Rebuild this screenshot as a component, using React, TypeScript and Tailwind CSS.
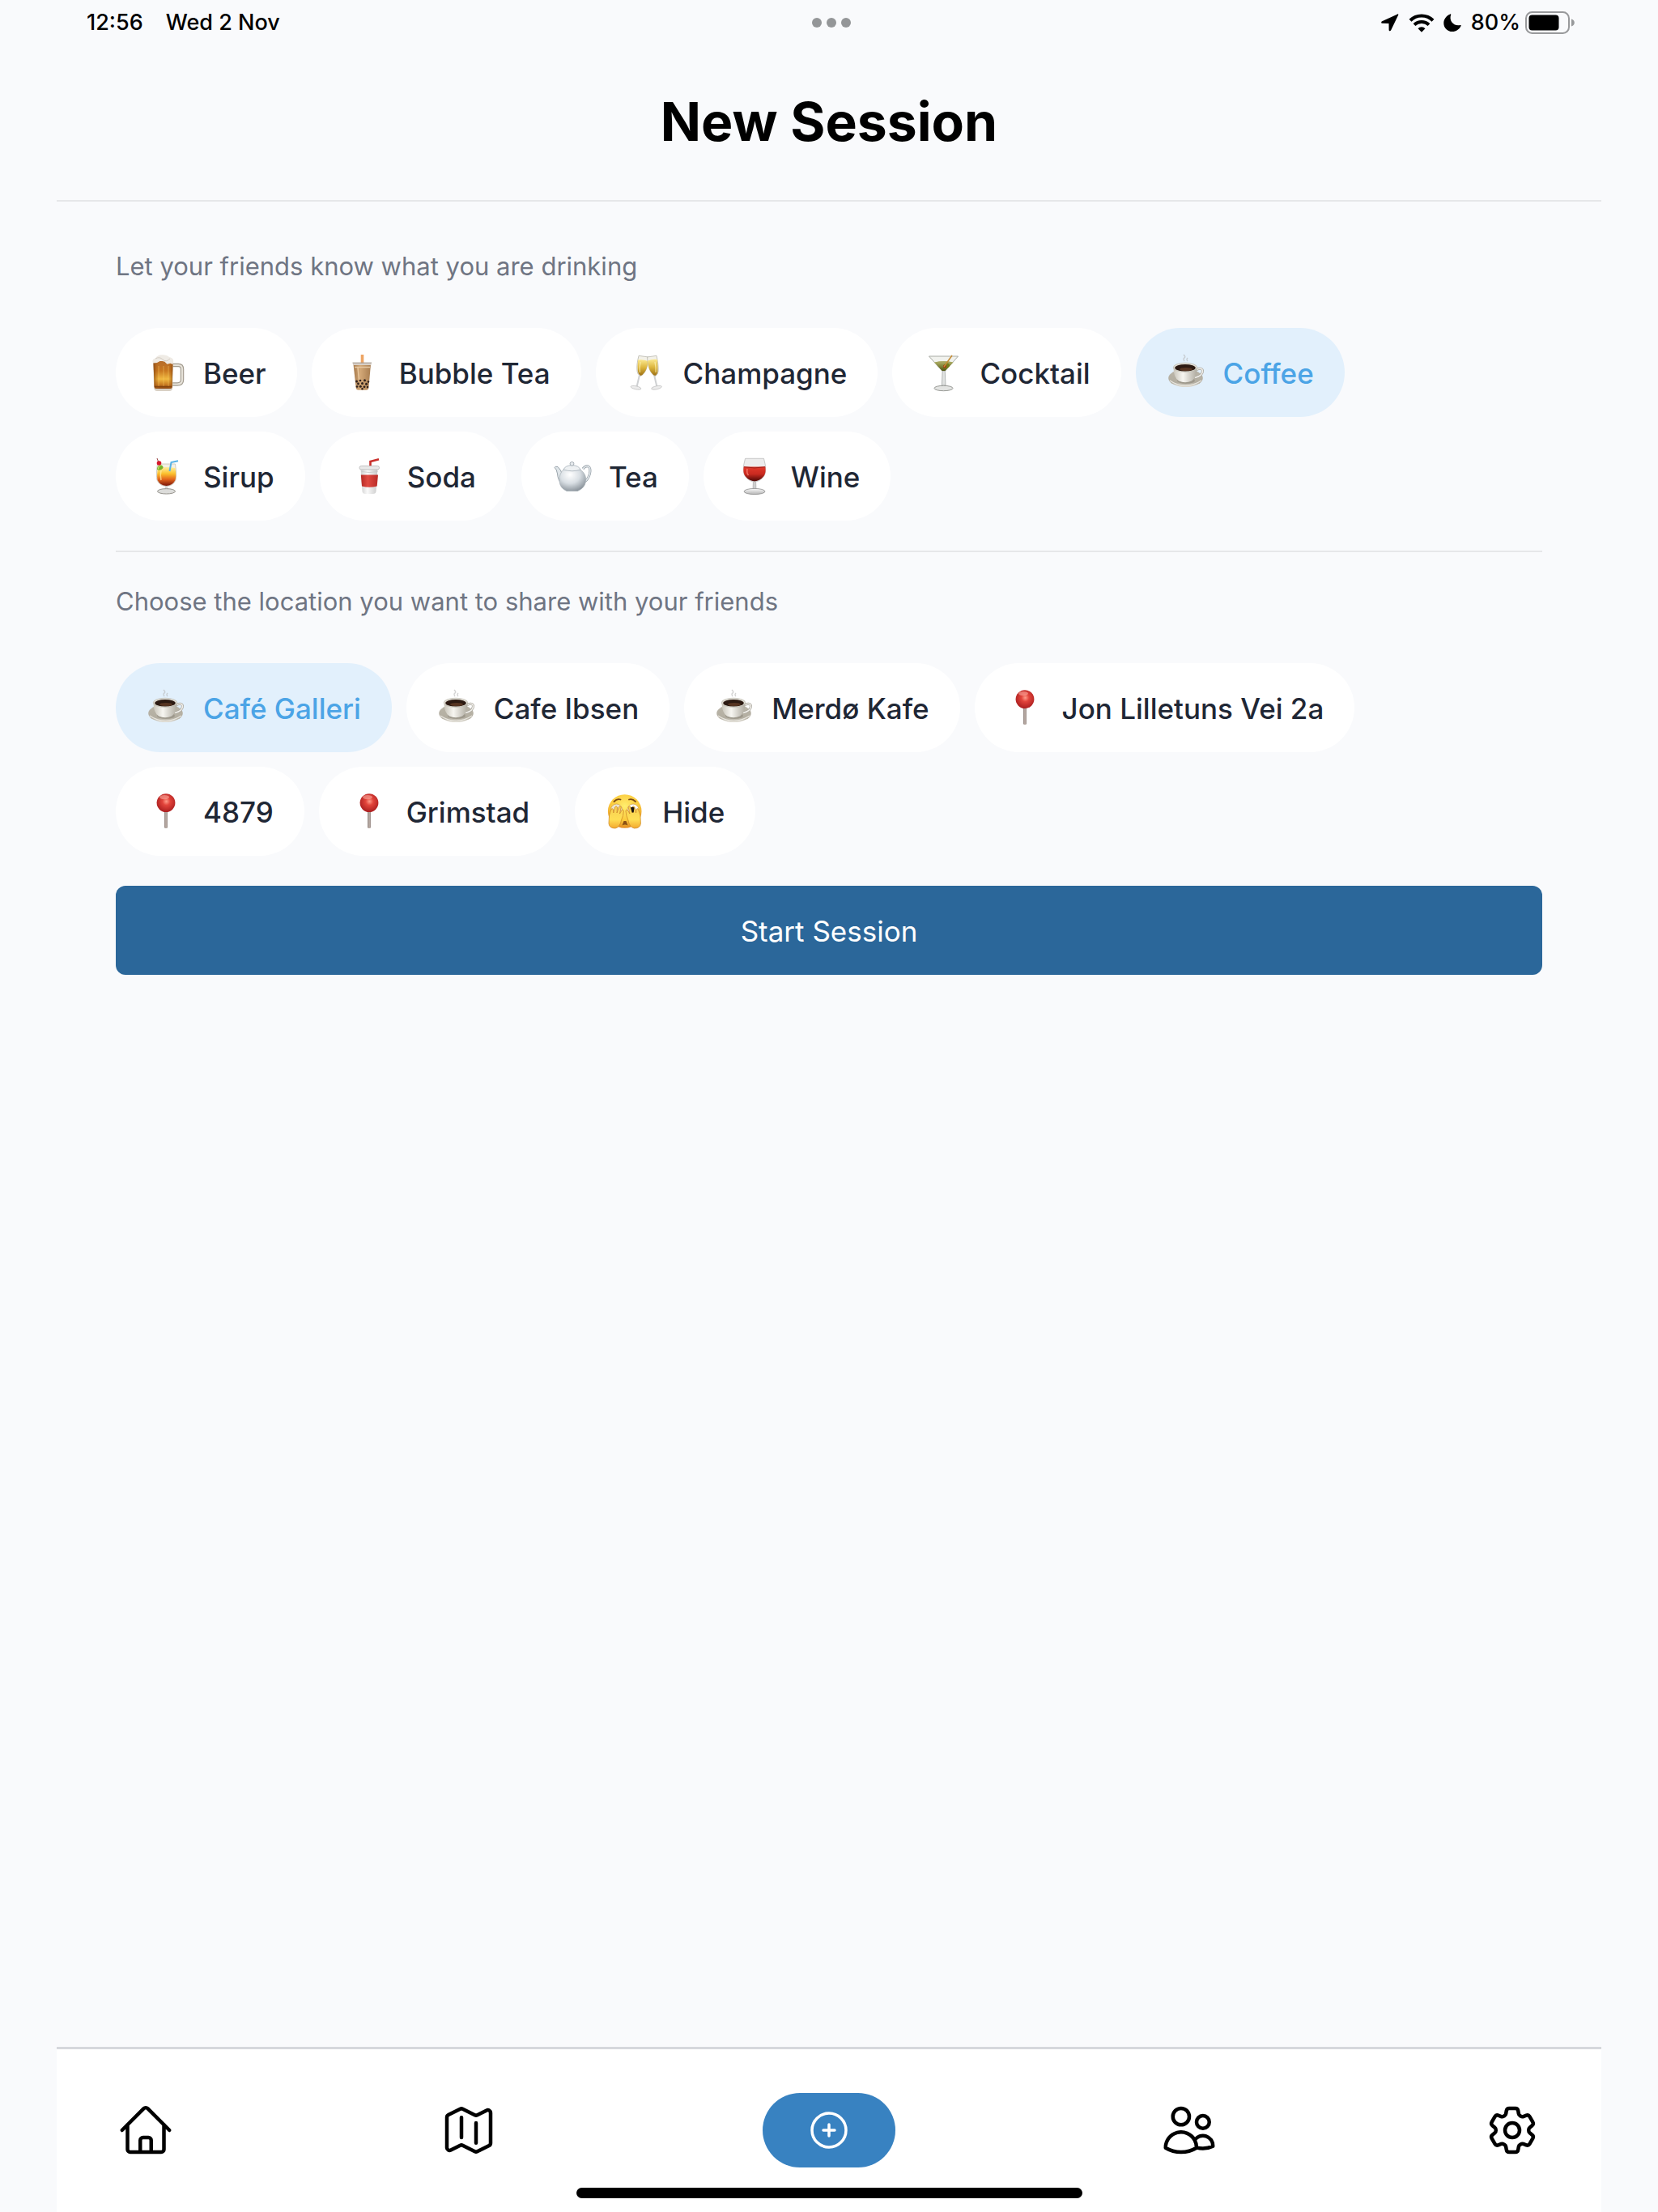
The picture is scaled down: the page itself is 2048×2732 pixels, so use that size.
import { useState, type ReactNode } from "react";
import {
  HiOutlineCog6Tooth,
  HiOutlineHome,
  HiOutlineMap,
  HiOutlinePlusCircle,
  HiOutlineUsers,
} from "react-icons/hi2";

function Emoji({ children }: { children: ReactNode }) {
  return (
    <svg viewBox="0 0 46 46" className="size-[46px] shrink-0 overflow-visible" aria-hidden="true">
      {children}
    </svg>
  );
}

function Gradients() {
  return (
    <svg className="absolute size-0" aria-hidden="true">
      <defs>
        <linearGradient id="beer" x1="0" x2="0" y1="0" y2="1">
          <stop offset="0" stopColor="#b56c2b" />
          <stop offset=".35" stopColor="#c9771f" />
          <stop offset=".65" stopColor="#f0b840" />
          <stop offset=".85" stopColor="#c97b22" />
          <stop offset="1" stopColor="#8a4310" />
        </linearGradient>
        <linearGradient id="beerSide" x1="0" x2="1" y1="0" y2="0">
          <stop offset="0" stopColor="#7d3f10" stopOpacity=".75" />
          <stop offset=".3" stopColor="#c97a20" stopOpacity="0" />
          <stop offset=".75" stopColor="#c97a20" stopOpacity="0" />
          <stop offset="1" stopColor="#7d3f10" stopOpacity=".7" />
        </linearGradient>
        <linearGradient id="milkTea" x1="0" x2="1" y1="0" y2="0">
          <stop offset="0" stopColor="#a67a4c" />
          <stop offset=".4" stopColor="#d3a877" />
          <stop offset="1" stopColor="#a87d50" />
        </linearGradient>
        <linearGradient id="fizz" x1="0" x2="0" y1="0" y2="1">
          <stop offset="0" stopColor="#fbe88f" />
          <stop offset=".5" stopColor="#dcb53c" />
          <stop offset="1" stopColor="#9c6f14" />
        </linearGradient>
        <linearGradient id="martini" x1="0" x2="0" y1="0" y2="1">
          <stop offset="0" stopColor="#b5b56a" />
          <stop offset="1" stopColor="#4e5510" />
        </linearGradient>
        <linearGradient id="china" x1="0" x2="1" y1="0" y2="0">
          <stop offset="0" stopColor="#c9c5ba" />
          <stop offset=".4" stopColor="#f7f6f1" />
          <stop offset="1" stopColor="#aeaa9f" />
        </linearGradient>
        <linearGradient id="saucer" x1="0" x2="0" y1="0" y2="1">
          <stop offset="0" stopColor="#bbb6a9" />
          <stop offset=".75" stopColor="#b3aea1" />
          <stop offset="1" stopColor="#dedbd2" />
        </linearGradient>
        <linearGradient id="sunrise" x1="0" x2="0" y1="0" y2="1">
          <stop offset="0" stopColor="#fff0a0" />
          <stop offset=".35" stopColor="#fbc02c" />
          <stop offset=".65" stopColor="#e4661d" />
          <stop offset="1" stopColor="#7a1408" />
        </linearGradient>
        <linearGradient id="paper" x1="0" x2="1" y1="0" y2="0">
          <stop offset="0" stopColor="#cfcfcf" />
          <stop offset=".4" stopColor="#fafafa" />
          <stop offset="1" stopColor="#c9c9c9" />
        </linearGradient>
        <linearGradient id="band" x1="0" x2="1" y1="0" y2="0">
          <stop offset="0" stopColor="#b52a25" />
          <stop offset=".4" stopColor="#e04a42" />
          <stop offset="1" stopColor="#b92b27" />
        </linearGradient>
        <radialGradient id="pot" cx=".4" cy=".3" r=".75">
          <stop offset="0" stopColor="#ffffff" />
          <stop offset=".5" stopColor="#d9dfe4" />
          <stop offset="1" stopColor="#868f97" />
        </radialGradient>
        <linearGradient id="wine" x1="0" x2="0" y1="0" y2="1">
          <stop offset="0" stopColor="#e2392b" />
          <stop offset=".5" stopColor="#c92a20" />
          <stop offset="1" stopColor="#4b0705" />
        </linearGradient>
        <linearGradient id="glass" x1="0" x2="0" y1="0" y2="1">
          <stop offset="0" stopColor="#fafafa" />
          <stop offset="1" stopColor="#b4b4b4" />
        </linearGradient>
        <radialGradient id="pin" cx=".52" cy=".42" r=".6">
          <stop offset="0" stopColor="#ff9c8a" />
          <stop offset=".35" stopColor="#e2443b" />
          <stop offset="1" stopColor="#a81c1e" />
        </radialGradient>
        <linearGradient id="needle" x1="0" x2="1" y1="0" y2="0">
          <stop offset="0" stopColor="#75655f" />
          <stop offset=".5" stopColor="#c9bdb6" />
          <stop offset="1" stopColor="#80706a" />
        </linearGradient>
        <radialGradient id="face" cx=".5" cy=".35" r=".65">
          <stop offset="0" stopColor="#ffee6e" />
          <stop offset=".65" stopColor="#fbc93b" />
          <stop offset="1" stopColor="#e28a22" />
        </radialGradient>
        <linearGradient id="hand" x1="0" x2="0" y1="0" y2="1">
          <stop offset="0" stopColor="#f6cf52" />
          <stop offset=".6" stopColor="#ffdf55" />
          <stop offset="1" stopColor="#f3a92f" />
        </linearGradient>
      </defs>
    </svg>
  );
}

const Beer = () => (
  <Emoji>
    <path d="M30 13h7.500q4.500 0 4.500 5v13q0 5.500-6 5.500h-6" fill="none" stroke="#a39c8f" strokeWidth="4.500" />
    <path d="M30 13h7.500q4.500 0 4.500 5v13q0 5.500-6 5.500h-6" fill="none" stroke="#e6e2d9" strokeWidth="2.200" />
    <path d="M6 8h25l-.8 33q-.2 4-4 4H11q-3.600 0-3.800-4z" fill="#d8d0c4" />
    <path d="M6.500 8h24l-.8 32q-.2 2-2.500 2H10q-2.200 0-2.400-2z" fill="url(#beer)" />
    <path d="M6.500 8h24l-.8 32q-.2 2-2.500 2H10q-2.200 0-2.400-2z" fill="url(#beerSide)" />
    <path d="M13 14v25M19 14v25M25 14v25" stroke="#f7cf6a" strokeOpacity=".3" strokeWidth="1.500" />
    <path d="M8 39.500h21" stroke="#6f3409" strokeOpacity=".6" strokeWidth="1.400" />
    <path d="M5.500 9Q5 5 9 4.500 11 .5 17 0.300q6-.3 9 2.700 4 .5 5 3.500.8 3-.6 5.500l-3-1.300-4 1.100-3-3-5-1.200L11 10l-4.800.5z" fill="#efebe5" />
    <path d="M9 5q5-3 9 1t9-1" fill="none" stroke="#d4ccc2" strokeWidth="1" />
  </Emoji>
);

const BubbleTea = () => (
  <Emoji>
    <path d="M22.500 0v11" stroke="#eda564" strokeWidth="3.600" />
    <path d="M11.500 12h21.500l-2.600 29q-.3 2.700-3.400 2.700h-9q-3 0-3.300-2.700z" fill="url(#milkTea)" />
    <path d="M11 10.500h22.500v2.500H11z" fill="#d9d0c6" />
    <path d="M10.500 10.200h23.500" stroke="#a89c91" strokeWidth="1.200" />
    <path d="M13 15.500h19" stroke="#e6c9a4" strokeWidth="1.500" />
    <path d="M17 16l1.500 15" stroke="#e9c79d" strokeWidth="1.500" />
    <g fill="#30211c">
      <circle cx="15.500" cy="33" r="1.500" />
      <circle cx="20" cy="32" r="1.300" />
      <circle cx="25.500" cy="31.800" r="1.500" />
      <circle cx="30" cy="33.500" r="1.200" />
      <circle cx="17.500" cy="36" r="1.400" />
      <circle cx="22.500" cy="35.500" r="1.500" />
      <circle cx="27.500" cy="36.300" r="1.500" />
      <circle cx="16" cy="39.500" r="1.300" />
      <circle cx="20.300" cy="39.300" r="1.500" />
      <circle cx="25" cy="39.800" r="1.400" />
      <circle cx="29" cy="40" r="1.200" />
      <circle cx="22.500" cy="42.300" r="1.200" />
    </g>
  </Emoji>
);

const Champagne = () => (
  <Emoji>
    <path d="M14 25 10.500 40" stroke="#cfd1d3" strokeWidth="2" />
    <ellipse cx="9.500" cy="40.800" rx="6.500" ry="2" transform="rotate(12 9.500 40.800)" fill="#ececec" stroke="#bcbcbc" strokeWidth=".7" />
    <path d="M32 25 35.500 40" stroke="#cfd1d3" strokeWidth="2" />
    <ellipse cx="35" cy="40.800" rx="6.500" ry="2" transform="rotate(-12 35 40.800)" fill="#ececec" stroke="#bcbcbc" strokeWidth=".7" />
    <path d="M13 1.300 25 3q-.8 13-4.500 18.500-2.500 4-5.500 5-3.500-2-4-6Q10 13 13 1.300z" fill="#f3f1e8" stroke="#b9b7ae" strokeWidth=".8" />
    <path d="M12 6.500q6-1 12.500 1.500-1 9.500-4.200 13.800-2.300 3.400-5 4.200-3-1.700-3.500-5.500-.6-6 .2-14z" fill="url(#fizz)" />
    <path d="M35 1.300 23.500 3q.8 13 4.500 18.500 2.500 4 5.500 5 3.500-2 3.600-6Q37.500 13 35 1.300z" fill="#f3f1e8" stroke="#b9b7ae" strokeWidth=".8" />
    <path d="M36 6q-6-1-12 1.500 1 10 4.200 14.300 2.300 3.400 5 4.200 3-1.700 3.200-5.500.3-6-.4-14.500z" fill="url(#fizz)" />
    <path d="M15 9q-1.500 7-.5 13M33 9q1.500 7 1 13" fill="none" stroke="#fff3b5" strokeWidth="1.300" opacity=".7" />
  </Emoji>
);

const Cocktail = () => (
  <Emoji>
    <path d="M22.200 18h3l.8 20h-4.600z" fill="#e0e2e1" stroke="#a6a9a8" strokeWidth=".8" />
    <ellipse cx="23.500" cy="41.500" rx="11.500" ry="3.200" fill="#e3e4e2" stroke="#989a96" strokeWidth="1" />
    <path d="M5.500 2h36L25.500 20h-3.800z" fill="#f1f2ee" stroke="#a9aca5" strokeWidth="1" />
    <path d="M12 9.500q12-2.500 23.500 0L25.500 20h-3.800z" fill="url(#martini)" />
    <path d="M12 9.500q12-2.500 23.500 0-11.500 2.500-23.500 0" fill="#a6a660" />
    <ellipse cx="27" cy="14" rx="4" ry="3" transform="rotate(-30 27 14)" fill="#737d1c" />
    <circle cx="25" cy="14.500" r="2" fill="#a53418" />
    <path d="M34 1 24 15" stroke="#c58c35" strokeWidth="1.500" />
  </Emoji>
);

const Coffee = () => (
  <Emoji>
    <path d="M20 8q-2-3 0-4t-1-4M24 8q-2-2 0-4" fill="none" stroke="#b5b5b5" strokeOpacity=".6" strokeWidth="1.400" />
    <ellipse cx="21.500" cy="29" rx="21.300" ry="11" fill="url(#saucer)" />
    <path d="M2 32q19 13 39 0" fill="none" stroke="#e9e7e0" strokeWidth="1.200" />
    <ellipse cx="22" cy="32" rx="11" ry="4" fill="#8e897d" opacity=".6" />
    <path d="M35 18.500q7-3 7.500 1.500 0 6-9.500 8.500" fill="none" stroke="#a7a49b" strokeWidth="3" />
    <path d="M35 18.500q7-3 7.500 1.500 0 6-9.500 8.500" fill="none" stroke="#f0eee9" strokeWidth="1.600" />
    <path d="M6.500 16q0 12 6.500 16.500 8 3.500 16 0Q35.700 28 35.700 16z" fill="url(#china)" />
    <ellipse cx="21" cy="15.800" rx="14.700" ry="5.600" fill="#e2dfd6" stroke="#b4b0a5" strokeWidth=".6" />
    <ellipse cx="21" cy="16.300" rx="12.800" ry="4.300" fill="#2c1a12" />
    <ellipse cx="22" cy="18" rx="8" ry="2" fill="#573522" />
  </Emoji>
);

const Sirup = () => (
  <Emoji>
    <path d="M21 33h3v6h-3z" fill="#d5d5d5" />
    <ellipse cx="22.500" cy="40.800" rx="11" ry="3.200" fill="#dcdcda" stroke="#97958f" strokeWidth="1" />
    <path d="M11.500 7h22q2 14 .5 20-3.500 7.500-11.500 7.500T11 27q-1.500-6 .5-20z" fill="#f4f0e4" stroke="#c5c1b6" strokeWidth=".8" />
    <path d="M12 12q10-2 21.500 0 1.500 10 0 15-3.500 7-11 7t-11-7q-1-6 .5-15z" fill="url(#sunrise)" />
    <path d="M16 15q-1.500 6 0 12" fill="none" stroke="#fff0a8" strokeWidth="1.500" opacity=".7" />
    <path d="M37 3.200 28.500 5 26.500 16" fill="none" stroke="#58b2e6" strokeWidth="2" />
    <path d="M11 14q0-5 4-6 4 1 3.500 4-3 4-7.500 2z" fill="#78b32b" />
    <path d="M12.500 13.500q0-4 3.500-5" fill="none" stroke="#c7e36e" strokeWidth="1.200" />
    <circle cx="13.500" cy="6" r="2.800" fill="#d8182c" />
    <path d="M12.500 4 11 0" stroke="#944" strokeWidth="1" />
  </Emoji>
);

const Soda = () => (
  <Emoji>
    <path d="M33 1.200 22.500 4v8" fill="none" stroke="#c9302c" strokeWidth="2.600" />
    <path d="M10.500 13h21l-2 28q-.2 3-4 3h-9q-3.700 0-4-3z" fill="url(#paper)" />
    <path d="M10.800 20.500h21.200l-1.300 14q-9.500 2.600-18.700 0z" fill="url(#band)" />
    <rect x="9" y="9.500" width="24.500" height="4.500" rx="2.200" fill="#e9e9e9" stroke="#b5b5b5" strokeWidth=".8" />
    <path d="M11.500 16.500q9.500 2 20 0" fill="none" stroke="#c4c4c4" strokeWidth=".8" />
  </Emoji>
);

const Tea = () => (
  <Emoji>
    <path d="M36 13q3-4 6.500-3 3.500 2 2 9-2 8-8 11" fill="none" stroke="#929ca4" strokeWidth="3" />
    <path d="M36 13q3-4 6.500-3 3.500 2 2 9-2 8-8 11" fill="none" stroke="#e4e9ec" strokeWidth="1.500" />
    <path d="M10 32Q5 27 4.500 19 3.500 13 1 11.500q.5-2 4-1 4 3 6 11z" fill="#dfe5e9" stroke="#8f9aa2" strokeWidth=".9" />
    <path d="M12 14q10-5 21 0 8 6 6.500 15-1.500 8-10 11.500H16Q7.500 37 7 28q-.5-9 5-14z" fill="url(#pot)" stroke="#a8b1b8" strokeWidth=".7" />
    <path d="M12 14q2-5 10.500-5.500Q31 9 33 14q-10 3.500-21 0z" fill="#eef1f3" stroke="#a5afb7" strokeWidth=".8" />
    <circle cx="22.500" cy="6.800" r="2.400" fill="#e6eaed" stroke="#939da5" strokeWidth=".8" />
  </Emoji>
);

const Wine = () => (
  <Emoji>
    <path d="M21.500 27h3l.5 11h-4z" fill="#cfcfcf" stroke="#a2a2a2" strokeWidth=".6" />
    <ellipse cx="23" cy="41" rx="13" ry="3.600" fill="url(#glass)" stroke="#8e8e8e" strokeWidth=".8" />
    <path d="M11.500.3h23q4.500 16 0 22-4.500 6-11.500 7-7-1-11.500-7-4.500-6 0-22z" fill="#ececec" stroke="#bdbdbd" strokeWidth=".8" />
    <path d="M9.600 10.500h26.800q1 7.500-1.900 11.500-4.500 5.800-11.500 6.500-7-.7-11.500-6.500-3-4-1.900-11.500z" fill="url(#wine)" />
    <path d="M10 10.700q13 2.500 26 0" fill="none" stroke="#9e1d16" strokeWidth="1" />
    <path d="M14 13q-1 5 1.500 8" fill="none" stroke="#ff8a7c" strokeWidth="1.600" opacity=".7" />
  </Emoji>
);

const Pin = () => (
  <Emoji>
    <rect x="20.200" y="21" width="3.600" height="22" rx="1.500" fill="url(#needle)" />
    <circle cx="22" cy="11.600" r="11.400" fill="url(#pin)" />
    <ellipse cx="20" cy="4.600" rx="6" ry="2.600" fill="#ffb3a6" opacity=".55" />
  </Emoji>
);

const handShape =
  "M2.500 27 5 19.500q1.500-2 2.500.5l.3 4L9.500 17q1.500-2.500 3 0l-.5 7 2.500-7.500q2-1.500 2.800.5l-1.800 8 2.500-4.500q2-1 2.500 1-.5 6-3 11.500-1.500 8.500-7.500 10Q2.500 43 2 37z";

const Hide = () => (
  <Emoji>
    <circle cx="21.700" cy="22" r="20.800" fill="url(#face)" />
    <path d="M8.500 10q4-4 8-2.500M27 7.500q4-1.500 8 2.500" fill="none" stroke="#7b4a14" strokeWidth="1.800" strokeLinecap="round" />
    <ellipse cx="32" cy="20" rx="7" ry="7" fill="#fbfaf6" stroke="#c79137" strokeWidth=".6" />
    <ellipse cx="11.500" cy="20" rx="7" ry="7" fill="#ece5cf" stroke="#c79137" strokeWidth=".6" />
    <path d="M18.500 39.500 20.500 34h3l2 5.500q-3.500-2-7 0z" fill="#8a5015" />
    <path d={handShape} fill="url(#hand)" stroke="#d08a26" strokeWidth=".8" strokeLinejoin="round" />
    <path d={handShape} transform="translate(43.400 0) scale(-1 1)" fill="url(#hand)" stroke="#d08a26" strokeWidth=".8" strokeLinejoin="round" />
    <path d="M29 17.500q2.500-1.500 4.500 0l-.8 6h-2z" fill="#171210" />
  </Emoji>
);

type Option = { label: string; icon: () => ReactNode };

const drinks: Option[] = [
  { label: "Beer", icon: Beer },
  { label: "Bubble Tea", icon: BubbleTea },
  { label: "Champagne", icon: Champagne },
  { label: "Cocktail", icon: Cocktail },
  { label: "Coffee", icon: Coffee },
  { label: "Sirup", icon: Sirup },
  { label: "Soda", icon: Soda },
  { label: "Tea", icon: Tea },
  { label: "Wine", icon: Wine },
];

const places: Option[] = [
  { label: "Café Galleri", icon: Coffee },
  { label: "Cafe Ibsen", icon: Coffee },
  { label: "Merdø Kafe", icon: Coffee },
  { label: "Jon Lilletuns Vei 2a", icon: Pin },
  { label: "4879", icon: Pin },
  { label: "Grimstad", icon: Pin },
  { label: "Hide", icon: Hide },
];

function ChipGroup({ title, options, initial }: { title: string; options: Option[]; initial: string }) {
  const [selected, setSelected] = useState(initial);
  return (
    <section>
      <h2 className="text-[31px] leading-[48px] text-[#6f7583]">{title}</h2>
      <div className="mt-[52px] flex max-w-[1600px] flex-wrap gap-[18px]">
        {options.map(({ label, icon: Icon }) => (
          <button
            key={label}
            type="button"
            aria-pressed={selected === label}
            onClick={() => setSelected(label)}
            className={
              "flex h-[110px] items-center gap-[22px] rounded-full pt-[2px] pr-[38px] pl-10 text-[35px] font-medium " +
              (selected === label ? "bg-[#e2f0fc] text-[#4ba4e6]" : "bg-white text-[#1f2735]")
            }
          >
            <Icon />
            {label}
          </button>
        ))}
      </div>
    </section>
  );
}

function StatusBar() {
  return (
    <div className="grid h-14 grid-cols-[1fr_auto_1fr] items-center pr-[102px] pl-[107px] text-[27px] font-medium">
      <div className="flex gap-7">
        <span>12:56</span>
        <span>Wed 2 Nov</span>
      </div>
      <div className="flex justify-center gap-[6px]">
        <span className="size-3 rounded-full bg-[#949698]" />
        <span className="size-3 rounded-full bg-[#949698]" />
        <span className="size-3 rounded-full bg-[#949698]" />
      </div>
      <div className="flex items-center justify-end">
        <svg viewBox="0 0 22 22" className="mr-3 size-[22px]" aria-label="Location">
          <path d="M20.300.4 1.200 9.300c-1.500.7-1.300 2.500.3 2.500l7.600.1c.3 0 .4.100.4.400l.1 7.600c0 1.700 1.900 2 2.600.4L21.200 1.600C21.600.6 21.100 0 20.300.4z" />
        </svg>
        <svg viewBox="0 0 32 23" className="mr-[11px] h-[23px] w-8" aria-label="Wi-Fi">
          <path d="M2 8.200a20 20 0 0 1 28 0" fill="none" stroke="#000" strokeWidth="4.200" />
          <path d="M7 13.600a13 13 0 0 1 18 0" fill="none" stroke="#000" strokeWidth="4" />
          <path d="M16 22.800l-4.500-4.600a6.400 6.400 0 0 1 9 0z" />
        </svg>
        <svg viewBox="0 0 22 22" className="mr-3 size-[22px]" aria-label="Do not disturb">
          <path d="M8.300.4C8.900.1 9.500.6 9.200 1.200 6.500 8.300 12.500 15.800 20.700 14c.7-.2 1.200.4.900 1C19.600 19.300 15.600 22 11 22 5 22 .3 17.300.3 11.400.3 6.600 3.600 2.200 8.300.4z" />
        </svg>
        <span>80%</span>
        <svg viewBox="0 0 62 28" className="ml-[6px] h-7 w-[62px]" aria-label="Battery">
          <rect x="1" y="1" width="53" height="26" rx="7.500" fill="none" stroke="#98999b" strokeWidth="2" />
          <rect x="4.500" y="4.500" width="37" height="19" rx="4" />
          <path d="M57 9.500q3.800 1.200 3.800 4.500T57 18.500z" fill="#98999b" />
        </svg>
      </div>
    </div>
  );
}

function TabBar() {
  return (
    <nav className="mx-[70px] border-t-[3px] border-[#d6d8dc] bg-white px-[74px] pt-[54px] pb-[17px]">
      <div className="flex items-center justify-between">
        <a href="#home" aria-label="Home">
          <HiOutlineHome className="size-[72px]" />
        </a>
        <a href="#map" aria-label="Map">
          <HiOutlineMap className="size-[72px]" />
        </a>
        <a
          href="#new"
          aria-label="New session"
          className="flex h-[92px] w-[164px] items-center justify-center rounded-full bg-[#3882c1] text-white"
        >
          <HiOutlinePlusCircle className="size-14" />
        </a>
        <a href="#friends" aria-label="Friends">
          <HiOutlineUsers className="size-[72px]" />
        </a>
        <a href="#settings" aria-label="Settings">
          <HiOutlineCog6Tooth className="size-[72px]" />
        </a>
      </div>
      <div className="mx-auto mt-[25px] h-[13px] w-[625px] rounded-full bg-black" />
    </nav>
  );
}

export default function App() {
  return (
    <div className="flex min-h-screen flex-col bg-[#f9fafc] font-['Inter',sans-serif] text-black">
      <Gradients />
      <StatusBar />
      <header className="mx-[70px] border-b-2 border-[#e6e7e9] pt-[54px] pb-[57px]">
        <h1 className="text-center text-[66px] leading-[80px] font-bold">New Session</h1>
      </header>
      <main className="mx-[143px] flex-1 pt-[56px]">
        <ChipGroup title="Let your friends know what you are drinking" options={drinks} initial="Coffee" />
        <hr className="my-[37px] border-t-2 border-[#e6e7e9]" />
        <ChipGroup
          title="Choose the location you want to share with your friends"
          options={places}
          initial="Café Galleri"
        />
        <button type="button" className="mt-[37px] h-[110px] w-full rounded-xl bg-[#2b679a] pt-[2px] text-[35px] text-white">
          Start Session
        </button>
      </main>
      <TabBar />
    </div>
  );
}
